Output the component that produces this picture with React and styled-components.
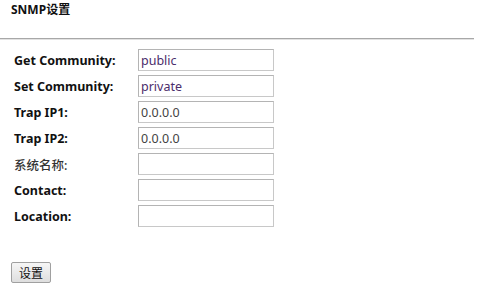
import React from "react";
import styled, { createGlobalStyle } from "styled-components";

const GlobalStyle = createGlobalStyle`
  html, body {
    margin: 0;
    padding: 0;
    background: #fff;
  }
  body {
    font-family: "Noto Sans", "Noto Sans CJK SC", sans-serif;
    color: #111;
  }
`;

const Page = styled.div`
  width: 485px;
  height: 300px;
  overflow: hidden;
`;

const Title = styled.h1`
  margin: 0;
  padding: 2px 0 0 11px;
  height: 38px;
  box-sizing: border-box;
  font-size: 12px;
  font-weight: bold;
  line-height: 16px;
  color: #111;
`;

const Divider = styled.div`
  width: 474px;
  height: 1px;
  background: #a8a8a8;
  border-bottom: 1px solid #e2e2e2;
`;

const Form = styled.div`
  display: grid;
  grid-template-columns: 124px 136px;
  row-gap: 4px;
  padding: 9px 0 0 14px;
`;

const Label = styled.label`
  display: flex;
  align-items: center;
  height: 22px;
  font-size: 12.5px;
  font-weight: ${(p) => (p.$plain ? 500 : "bold")};
  color: ${(p) => (p.$plain ? "#333" : "#111")};
`;

const Input = styled.input`
  box-sizing: border-box;
  width: 136px;
  height: 22px;
  margin: 0;
  padding: 0 2px;
  border: 1px solid #c8c8c8;
  border-top-color: #b4b4b4;
  border-left-color: #b4b4b4;
  font-family: "Noto Sans", "Noto Sans CJK SC", sans-serif;
  font-size: 12.5px;
  color: ${(p) => p.$color || "#444"};
  background: #fff;
  outline: none;
`;

const Actions = styled.div`
  padding: 34px 0 0 11px;
`;

const Button = styled.button`
  box-sizing: border-box;
  width: 40px;
  height: 21px;
  padding: 0;
  border: 1px solid #a0a0a0;
  border-radius: 2px;
  background: linear-gradient(#f6f6f6, #dedede);
  font-family: "Noto Sans CJK SC", sans-serif;
  font-size: 12px;
  color: #111;
`;

const fields = [
  { label: "Get Community:", value: "public", color: "#4b2d6b" },
  { label: "Set Community:", value: "private", color: "#4b2d6b" },
  { label: "Trap IP1:", value: "0.0.0.0" },
  { label: "Trap IP2:", value: "0.0.0.0" },
  { label: "系统名称:", value: "", plain: true },
  { label: "Contact:", value: "" },
  { label: "Location:", value: "" },
];

const App = () => {
  return (
    <Page>
      <GlobalStyle />
      <Title>SNMP设置</Title>
      <Divider />
      <Form>
        {fields.map((f) => (
          <React.Fragment key={f.label}>
            <Label $plain={f.plain}>{f.label}</Label>
            <Input defaultValue={f.value} $color={f.color} />
          </React.Fragment>
        ))}
      </Form>
      <Actions>
        <Button>设置</Button>
      </Actions>
    </Page>
  );
};

export default App;
